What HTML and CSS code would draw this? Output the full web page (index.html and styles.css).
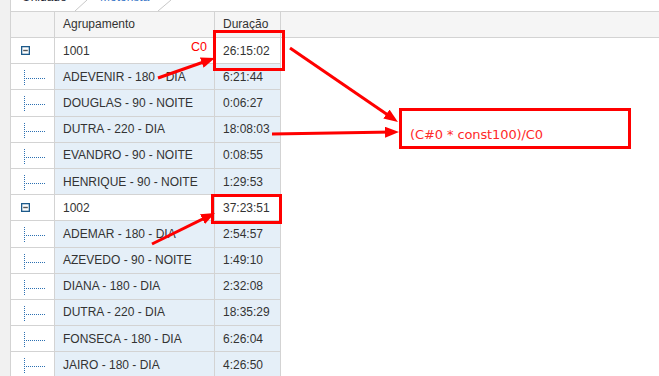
FILE: index.html
```html
<!DOCTYPE html>
<html lang="pt-BR">
<head>
<meta charset="utf-8">
<title>Agrupamento</title>
<link rel="stylesheet" href="styles.css">
</head>
<body>
<div class="app">
  <div class="side"></div>
  <div class="main">
    <div class="tabs">
      <span class="tab tab-a">Unidade</span>
      <svg class="sep" width="12" height="11" viewBox="0 0 12 11"><line x1="0" y1="11" x2="12" y2="0" stroke="#c8c8c8" stroke-width="1"/></svg>
      <span class="tab tab-b">Motorista</span>
      <svg class="sep" width="13" height="11" viewBox="0 0 13 11"><line x1="0" y1="11" x2="13" y2="0" stroke="#c8c8c8" stroke-width="1"/></svg>
    </div>
    <div class="grid">
      <div class="row head">
        <div class="h"></div>
        <div class="h">Agrupamento</div>
        <div class="h">Duração</div>
        <div class="h fill"></div>
      </div>

      <div class="row group">
        <div class="c ic"><svg width="9" height="9" viewBox="0 0 9 9"><rect x="0.65" y="0.65" width="7.7" height="7.7" fill="#fff" stroke="#1d5a8a" stroke-width="1.3"/><line x1="2.2" y1="4.5" x2="6.8" y2="4.5" stroke="#555" stroke-width="1.4"/></svg></div>
        <div class="c">1001</div>
        <div class="c">26:15:02</div>
        <div></div>
      </div>
      <div class="row child">
        <div class="c tr"><svg width="22" height="25" viewBox="0 0 22 25"><line x1="0.5" y1="6" x2="0.5" y2="21" stroke="#2c70b2" stroke-dasharray="1 1"/><line x1="2" y1="14.5" x2="21" y2="14.5" stroke="#2c70b2" stroke-dasharray="1 1"/></svg></div>
        <div class="c v">ADEVENIR - 180 - DIA</div>
        <div class="c v">6:21:44</div>
        <div></div>
      </div>
      <div class="row child">
        <div class="c tr"><svg width="22" height="25" viewBox="0 0 22 25"><line x1="0.5" y1="6" x2="0.5" y2="21" stroke="#2c70b2" stroke-dasharray="1 1"/><line x1="2" y1="14.5" x2="21" y2="14.5" stroke="#2c70b2" stroke-dasharray="1 1"/></svg></div>
        <div class="c v">DOUGLAS - 90 - NOITE</div>
        <div class="c v">0:06:27</div>
        <div></div>
      </div>
      <div class="row child">
        <div class="c tr"><svg width="22" height="25" viewBox="0 0 22 25"><line x1="0.5" y1="6" x2="0.5" y2="21" stroke="#2c70b2" stroke-dasharray="1 1"/><line x1="2" y1="14.5" x2="21" y2="14.5" stroke="#2c70b2" stroke-dasharray="1 1"/></svg></div>
        <div class="c v">DUTRA - 220 - DIA</div>
        <div class="c v">18:08:03</div>
        <div></div>
      </div>
      <div class="row child">
        <div class="c tr"><svg width="22" height="25" viewBox="0 0 22 25"><line x1="0.5" y1="6" x2="0.5" y2="21" stroke="#2c70b2" stroke-dasharray="1 1"/><line x1="2" y1="14.5" x2="21" y2="14.5" stroke="#2c70b2" stroke-dasharray="1 1"/></svg></div>
        <div class="c v">EVANDRO - 90 - NOITE</div>
        <div class="c v">0:08:55</div>
        <div></div>
      </div>
      <div class="row child">
        <div class="c tr"><svg width="22" height="25" viewBox="0 0 22 25"><line x1="0.5" y1="6" x2="0.5" y2="21" stroke="#2c70b2" stroke-dasharray="1 1"/><line x1="2" y1="14.5" x2="21" y2="14.5" stroke="#2c70b2" stroke-dasharray="1 1"/></svg></div>
        <div class="c v">HENRIQUE - 90 - NOITE</div>
        <div class="c v">1:29:53</div>
        <div></div>
      </div>

      <div class="row group">
        <div class="c ic"><svg width="9" height="9" viewBox="0 0 9 9"><rect x="0.65" y="0.65" width="7.7" height="7.7" fill="#fff" stroke="#1d5a8a" stroke-width="1.3"/><line x1="2.2" y1="4.5" x2="6.8" y2="4.5" stroke="#555" stroke-width="1.4"/></svg></div>
        <div class="c">1002</div>
        <div class="c">37:23:51</div>
        <div></div>
      </div>
      <div class="row child">
        <div class="c tr"><svg width="22" height="25" viewBox="0 0 22 25"><line x1="0.5" y1="6" x2="0.5" y2="21" stroke="#2c70b2" stroke-dasharray="1 1"/><line x1="2" y1="14.5" x2="21" y2="14.5" stroke="#2c70b2" stroke-dasharray="1 1"/></svg></div>
        <div class="c v">ADEMAR - 180 - DIA</div>
        <div class="c v">2:54:57</div>
        <div></div>
      </div>
      <div class="row child">
        <div class="c tr"><svg width="22" height="25" viewBox="0 0 22 25"><line x1="0.5" y1="6" x2="0.5" y2="21" stroke="#2c70b2" stroke-dasharray="1 1"/><line x1="2" y1="14.5" x2="21" y2="14.5" stroke="#2c70b2" stroke-dasharray="1 1"/></svg></div>
        <div class="c v">AZEVEDO - 90 - NOITE</div>
        <div class="c v">1:49:10</div>
        <div></div>
      </div>
      <div class="row child">
        <div class="c tr"><svg width="22" height="25" viewBox="0 0 22 25"><line x1="0.5" y1="6" x2="0.5" y2="21" stroke="#2c70b2" stroke-dasharray="1 1"/><line x1="2" y1="14.5" x2="21" y2="14.5" stroke="#2c70b2" stroke-dasharray="1 1"/></svg></div>
        <div class="c v">DIANA - 180 - DIA</div>
        <div class="c v">2:32:08</div>
        <div></div>
      </div>
      <div class="row child">
        <div class="c tr"><svg width="22" height="25" viewBox="0 0 22 25"><line x1="0.5" y1="6" x2="0.5" y2="21" stroke="#2c70b2" stroke-dasharray="1 1"/><line x1="2" y1="14.5" x2="21" y2="14.5" stroke="#2c70b2" stroke-dasharray="1 1"/></svg></div>
        <div class="c v">DUTRA - 220 - DIA</div>
        <div class="c v">18:35:29</div>
        <div></div>
      </div>
      <div class="row child">
        <div class="c tr"><svg width="22" height="25" viewBox="0 0 22 25"><line x1="0.5" y1="6" x2="0.5" y2="21" stroke="#2c70b2" stroke-dasharray="1 1"/><line x1="2" y1="14.5" x2="21" y2="14.5" stroke="#2c70b2" stroke-dasharray="1 1"/></svg></div>
        <div class="c v">FONSECA - 180 - DIA</div>
        <div class="c v">6:26:04</div>
        <div></div>
      </div>
      <div class="row child">
        <div class="c tr"><svg width="22" height="25" viewBox="0 0 22 25"><line x1="0.5" y1="6" x2="0.5" y2="21" stroke="#2c70b2" stroke-dasharray="1 1"/><line x1="2" y1="14.5" x2="21" y2="14.5" stroke="#2c70b2" stroke-dasharray="1 1"/></svg></div>
        <div class="c v">JAIRO - 180 - DIA</div>
        <div class="c v">4:26:50</div>
        <div></div>
      </div>
    </div>
  </div>

  <svg class="arrows" width="659" height="376" viewBox="0 0 659 376">
    <defs>
      <marker id="ah" markerUnits="userSpaceOnUse" markerWidth="15" markerHeight="11" refX="8" refY="5.5" orient="auto">
        <path d="M0,0 L14,5.5 L0,11 Z" fill="#ff0000"/>
      </marker>
    </defs>
    <g stroke="#ff0000" stroke-width="3" fill="none">
      <line x1="158" y1="78" x2="209.3" y2="60" marker-end="url(#ah)"/>
      <line x1="152" y1="244" x2="209.6" y2="215.7" marker-end="url(#ah)"/>
      <line x1="290" y1="48" x2="393" y2="118.6" marker-end="url(#ah)"/>
      <line x1="272" y1="134" x2="393" y2="132.1" marker-end="url(#ah)"/>
    </g>
  </svg>
  <div class="mark mark-1"></div>
  <div class="mark mark-2"></div>
  <div class="label-c0">C0</div>
  <div class="formula">(C#0 * const100)/C0</div>
</div>
</body>
</html>
```

FILE: styles.css
```css
html, body {
  margin: 0;
  padding: 0;
  height: 100%;
  overflow: hidden;
  background: #ffffff;
}

body {
  font-family: "Liberation Sans", Arial, sans-serif;
  font-size: 12px;
  color: #333333;
}

.app {
  position: relative;
  display: flex;
  height: 376px;
  overflow: hidden;
}

.side {
  flex: none;
  width: 10px;
  background: #f1f1f1;
  border-right: 1px solid #d3d3d3;
}

.main {
  flex: 1;
  display: flex;
  flex-direction: column;
  min-width: 0;
}

/* cut-off tab strip */
.tabs {
  flex: none;
  height: 11px;
  overflow: hidden;
  display: flex;
  align-items: flex-start;
  padding-left: 11px;
}

.tab {
  flex: none;
  line-height: 14px;
  margin-top: -10.5px;
  white-space: nowrap;
}

.tab-a {
  width: 53px;
  color: #1d2633;
}

.tab-b {
  width: 58px;
  padding-left: 13px;
  color: #3b78c8;
}

.sep {
  flex: none;
  display: block;
}

/* grid */
.grid {
  display: flex;
  flex-direction: column;
}

.row {
  display: grid;
  grid-template-columns: 44px 160px 66px 1fr;
  height: 26.2px;
  flex: none;
}

.row.head {
  height: 27px;
}

.h {
  box-sizing: border-box;
  background: #f5f5f5;
  border-top: 1px solid #d3d3d3;
  border-bottom: 1px solid #d3d3d3;
  border-right: 1px solid #d3d3d3;
  display: flex;
  align-items: center;
  padding: 0 0 2px 8px;
  white-space: nowrap;
}

.h.fill {
  border-right: none;
}

.c {
  box-sizing: border-box;
  border-right: 1px solid #d3d3d3;
  border-bottom: 1px solid #d3d3d3;
  display: flex;
  align-items: center;
  padding-left: 8px;
  white-space: nowrap;
  background: #ffffff;
}

.c.v {
  background: #e5eff8;
}

.c.ic {
  padding-left: 10px;
}

.c.ic svg {
  display: block;
  margin-top: -1px;
}

.c.tr {
  padding-left: 13px;
  align-items: flex-start;
}

.c.tr svg {
  display: block;
}

/* annotations */
.arrows {
  position: absolute;
  left: 0;
  top: 0;
  pointer-events: none;
}

.mark {
  position: absolute;
  box-sizing: border-box;
  border: 3px solid #ff0000;
}

.mark-1 {
  left: 213px;
  top: 30px;
  width: 72px;
  height: 41px;
}

.mark-2 {
  left: 211px;
  top: 194px;
  width: 71px;
  height: 30px;
}

.label-c0 {
  position: absolute;
  left: 191px;
  top: 40px;
  line-height: 14px;
  font-size: 12.5px;
  color: #ff0000;
}

.formula {
  position: absolute;
  left: 399px;
  top: 108px;
  width: 232px;
  height: 41px;
  box-sizing: border-box;
  border: 3px solid #ff0000;
  padding: 17px 0 0 8px;
  font-family: "DejaVu Sans", Verdana, sans-serif;
  font-size: 13px;
  line-height: 13px;
  letter-spacing: -0.1px;
  color: #ff2a2a;
  white-space: nowrap;
}
```
